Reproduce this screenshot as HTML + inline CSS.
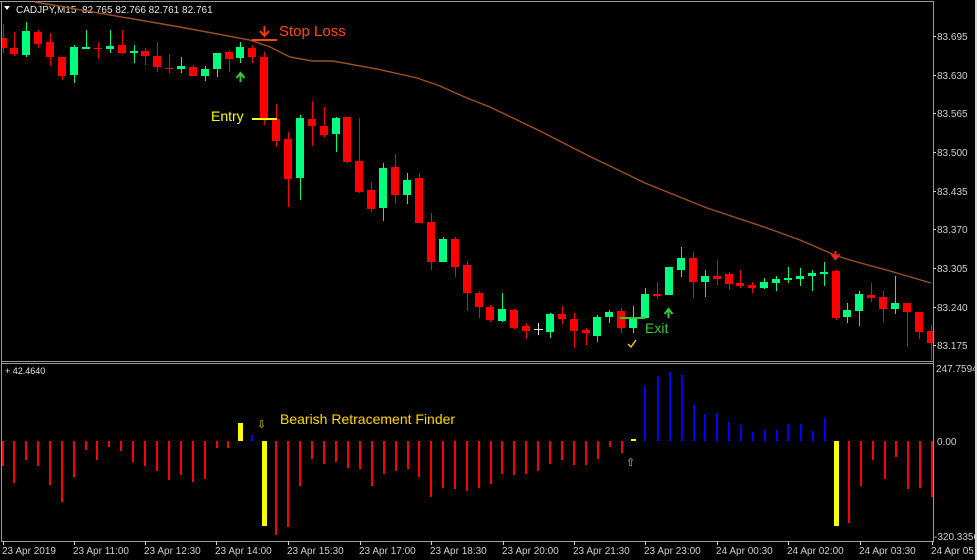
<!DOCTYPE html>
<html><head><meta charset="utf-8"><style>
html,body{margin:0;padding:0;background:#000;width:977px;height:560px;overflow:hidden}
svg{display:block}
text{font-family:"Liberation Sans",sans-serif}
</style></head><body>
<svg width="977" height="560" viewBox="0 0 977 560" xmlns="http://www.w3.org/2000/svg">
<rect width="977" height="560" fill="#000"/>
<rect x="975" y="0" width="2" height="560" fill="#d8d8d8"/>
<g stroke="#9a9a9a" stroke-width="1" fill="none" shape-rendering="crispEdges">
<line x1="0" y1="1.5" x2="934" y2="1.5"/>
<line x1="1.5" y1="1" x2="1.5" y2="541"/>
<line x1="933.5" y1="1" x2="933.5" y2="541"/>
<line x1="1" y1="361.5" x2="934" y2="361.5"/>
<line x1="1" y1="363.5" x2="934" y2="363.5"/>
<line x1="1" y1="541.5" x2="934" y2="541.5"/>
</g>
<g fill="#cfcfcf" font-size="10">
<text x="937" y="40">83.695</text><text x="937" y="79">83.630</text><text x="937" y="117">83.565</text><text x="937" y="156">83.500</text><text x="937" y="195">83.435</text><text x="937" y="233">83.370</text><text x="937" y="272">83.305</text><text x="937" y="311">83.240</text><text x="937" y="349">83.175</text>
<text x="936" y="372">247.7594</text><text x="937" y="445">0.00</text><text x="934" y="540">-320.3356</text>
</g>
<g stroke="#cfcfcf" shape-rendering="crispEdges">
<line x1="933" y1="36.5" x2="936" y2="36.5"/><line x1="933" y1="75.5" x2="936" y2="75.5"/><line x1="933" y1="113.5" x2="936" y2="113.5"/><line x1="933" y1="152.5" x2="936" y2="152.5"/><line x1="933" y1="191.5" x2="936" y2="191.5"/><line x1="933" y1="229.5" x2="936" y2="229.5"/><line x1="933" y1="268.5" x2="936" y2="268.5"/><line x1="933" y1="307.5" x2="936" y2="307.5"/><line x1="933" y1="345.5" x2="936" y2="345.5"/>
</g>
<polygon points="4,6 10,6 7,10" fill="#fff"/>
<text x="16" y="13" fill="#e8e8e8" font-size="10">CADJPY,M15&#160;&#160;82.765 82.766 82.761 82.761</text>
<polyline fill="none" stroke="#a0521e" stroke-width="1.4" points="35,2 180,27 250,40 270,47 290,57 312,61 333,61 377,69 417,78 440,86 467,98 490,107 540,131 587,155 645,183 707,208 767,228 800,240 837,256 857,262 890,271 931,283"/>
<g shape-rendering="crispEdges">
<g stroke="#ff0000" stroke-width="1">
<path d="M3.5 24V53M14.5 32V56M38.5 30V48M50.5 33V66M62.5 57V80M98.5 42V59M122.5 30V54M145.5 48V65M157.5 42V72M169.5 54V73M193.5 65V76M229.5 50V72M252.5 45V63M264.5 52V125M276.5 104V147M288.5 132V207M312.5 101V146M324.5 107V137M347.5 117V163M359.5 118V193M371.5 182V212M395.5 154V204M419.5 173V223M431.5 213V270M455.5 237V277M467.5 261V311M479.5 291V318M490.5 305V322M514.5 309V329M526.5 323V339M562.5 306V324M574.5 313V348M586.5 328V345M621.5 308V333M657.5 282V299M693.5 252V298M717.5 260V285M729.5 272V290M740.5 270V288M752.5 282V293M836.5 270V320M871.5 283V302M883.5 291V322M907.5 303V347M919.5 312V339M931.5 325V360"/>
</g>
<g stroke="#00ff7f" stroke-width="1">
<path d="M26.5 22V57M74.5 45V83M86.5 30V49M110.5 30V53M134.5 45V63M181.5 57V73M205.5 66V81M217.5 53V77M240.5 42V63M300.5 115V200M336.5 117V152M383.5 163V221M407.5 173V204M443.5 237V262M502.5 293V322M550.5 313V338M597.5 315V342M609.5 310V323M633.5 306V333M645.5 288V318M669.5 267V295M681.5 247V277M705.5 270V297M764.5 278V289M776.5 276V291M788.5 267V283M800.5 268V286M812.5 270V291M824.5 262V286M847.5 303V323M859.5 291V326M895.5 276V314"/>
</g>
<g fill="#ff0000">
<rect x="2" y="38" width="5" height="10"/><rect x="10" y="48" width="8" height="6"/><rect x="34" y="32" width="8" height="12"/><rect x="46" y="42" width="8" height="15"/><rect x="58" y="57" width="8" height="19"/><rect x="94" y="48" width="8" height="1"/><rect x="118" y="45" width="8" height="8"/><rect x="141" y="51" width="8" height="5"/><rect x="153" y="56" width="8" height="11"/><rect x="165" y="68" width="8" height="1"/><rect x="189" y="67" width="8" height="9"/><rect x="225" y="52" width="8" height="7"/><rect x="248" y="48" width="8" height="9"/><rect x="260" y="57" width="8" height="61"/><rect x="272" y="119" width="8" height="22"/><rect x="284" y="139" width="8" height="40"/><rect x="308" y="119" width="8" height="7"/><rect x="320" y="126" width="8" height="9"/><rect x="343" y="117" width="8" height="45"/><rect x="355" y="161" width="8" height="31"/><rect x="367" y="190" width="8" height="19"/><rect x="391" y="167" width="8" height="28"/><rect x="415" y="178" width="8" height="45"/><rect x="427" y="222" width="8" height="40"/><rect x="451" y="239" width="8" height="28"/><rect x="463" y="265" width="8" height="28"/><rect x="475" y="293" width="8" height="14"/><rect x="486" y="307" width="8" height="13"/><rect x="510" y="310" width="8" height="18"/><rect x="522" y="326" width="8" height="5"/><rect x="558" y="314" width="8" height="5"/><rect x="570" y="319" width="8" height="12"/><rect x="582" y="330" width="8" height="3"/><rect x="617" y="311" width="8" height="17"/><rect x="653" y="294" width="8" height="2"/><rect x="689" y="258" width="8" height="24"/><rect x="713" y="276" width="8" height="3"/><rect x="725" y="274" width="8" height="10"/><rect x="736" y="283" width="8" height="3"/><rect x="748" y="285" width="8" height="3"/><rect x="832" y="271" width="8" height="47"/><rect x="867" y="295" width="8" height="3"/><rect x="879" y="297" width="8" height="12"/><rect x="903" y="303" width="8" height="9"/><rect x="915" y="312" width="8" height="20"/><rect x="927" y="331" width="6" height="12"/>
</g>
<g fill="#00ff7f">
<rect x="22" y="31" width="8" height="24"/><rect x="70" y="47" width="8" height="28"/><rect x="82" y="47" width="8" height="2"/><rect x="106" y="46" width="8" height="3"/><rect x="130" y="51" width="8" height="2"/><rect x="177" y="66" width="8" height="3"/><rect x="201" y="69" width="8" height="7"/><rect x="213" y="53" width="8" height="16"/><rect x="236" y="47" width="8" height="11"/><rect x="296" y="118" width="8" height="60"/><rect x="332" y="118" width="8" height="16"/><rect x="379" y="168" width="8" height="40"/><rect x="403" y="180" width="8" height="15"/><rect x="439" y="239" width="8" height="23"/><rect x="498" y="309" width="8" height="12"/><rect x="546" y="314" width="8" height="18"/><rect x="593" y="317" width="8" height="19"/><rect x="605" y="312" width="8" height="5"/><rect x="629" y="319" width="8" height="9"/><rect x="641" y="294" width="8" height="24"/><rect x="665" y="267" width="8" height="28"/><rect x="677" y="258" width="8" height="12"/><rect x="701" y="276" width="8" height="6"/><rect x="760" y="282" width="8" height="6"/><rect x="772" y="279" width="8" height="4"/><rect x="784" y="278" width="8" height="2"/><rect x="796" y="276" width="8" height="3"/><rect x="808" y="273" width="8" height="3"/><rect x="820" y="272" width="8" height="2"/><rect x="843" y="310" width="8" height="7"/><rect x="855" y="294" width="8" height="17"/><rect x="891" y="303" width="8" height="6"/>
</g>
<path d="M538.5 323V335M534 329.5H543" stroke="#e0e0e0"/>
</g>
<path d="M264.5 26V35M260 31L264.5 36L269 31" stroke="#ff3a10" stroke-width="2" fill="none"/>
<rect x="252" y="39" width="25" height="2" fill="#ff4a10"/>
<text x="279" y="36" fill="#ff4a10" font-size="15">Stop Loss</text>
<rect x="252" y="118" width="25" height="2" fill="#ffff00"/>
<text x="211" y="121" fill="#ffff00" font-size="14">Entry</text>
<path d="M240.5 82V74M236.5 78L240.5 73L244.5 78" stroke="#33cc33" stroke-width="2" fill="none"/>
<path d="M668.5 318V310M664.5 314L668.5 309L672.5 314" stroke="#33cc33" stroke-width="2" fill="none"/>
<rect x="620" y="317" width="25" height="2" fill="#33cc33"/>
<text x="645" y="333" fill="#33cc33" font-size="14">Exit</text>
<path d="M628 344L631 347L636 340" stroke="#ffdd00" stroke-width="1.3" fill="none"/>
<path d="M835.5 251V258M831.5 254L835.5 259L839.5 254" stroke="#ff2020" stroke-width="2" fill="none"/>
<text x="5" y="374" fill="#e8e8e8" font-size="9">+ 42.4640</text>
<g stroke="#ff0000" stroke-width="2" shape-rendering="crispEdges">
<path d="M3 441V466M14 441V483M26 441V460M38 441V466M50 441V485M62 441V502M74 441V477M86 441V450M97 441V460M109 441V447M121 441V451M133 441V462M145 441V466M157 441V471M169 441V480M181 441V475M193 441V482M205 441V479M217 441V448M228 441V448M276 441V535M288 441V527M300 441V486M312 441V459M324 441V464M336 441V462M348 441V468M360 441V469M372 441V486M384 441V474M396 441V471M408 441V469M419 441V477M431 441V497M443 441V488M455 441V489M467 441V491M479 441V488M491 441V484M502 441V474M514 441V475M526 441V474M538 441V471M550 441V464M562 441V460M574 441V465M586 441V465M598 441V459M610 441V447M622 441V453M849 441V523M861 441V486M873 441V460M885 441V479M896 441V457M908 441V489M920 441V488M932 441V497"/>
</g>
<g stroke="#0000ff" stroke-width="2" shape-rendering="crispEdges">
<path d="M252 441V435M645 441V386M658 441V376M670 441V372M682 441V375M694 441V405M705 441V414M717 441V413M729 441V422M741 441V425M753 441V432M765 441V430M777 441V430M788 441V424M801 441V424M813 441V431M825 441V418"/>
</g>
<g fill="#ffff00">
<rect x="238" y="423" width="5" height="18"/><rect x="262" y="441" width="5" height="85"/><rect x="631" y="439" width="5" height="2"/><rect x="834" y="441" width="5" height="85"/>
</g>
<text x="257" y="428" fill="#e8c800" font-size="11">⇩</text>
<text x="626" y="466" fill="#e8c800" font-size="11">⇧</text>
<text x="280" y="424" fill="#ffd700" font-size="14">Bearish Retracement Finder</text>
<g stroke="#cfcfcf" shape-rendering="crispEdges">
<path d="M3.5 541V545M74.5 541V545M145.5 541V545M216.5 541V545M288.5 541V545M360.5 541V545M431.5 541V545M503.5 541V545M574.5 541V545M645.5 541V545M717.5 541V545M788.5 541V545M860.5 541V545M932.5 541V545"/>
</g>
<g fill="#cfcfcf" font-size="10">
<text x="2" y="554">23 Apr 2019</text><text x="73" y="554">23 Apr 11:00</text><text x="144" y="554">23 Apr 12:30</text><text x="215" y="554">23 Apr 14:00</text><text x="287" y="554">23 Apr 15:30</text><text x="359" y="554">23 Apr 17:00</text><text x="430" y="554">23 Apr 18:30</text><text x="502" y="554">23 Apr 20:00</text><text x="573" y="554">23 Apr 21:30</text><text x="644" y="554">23 Apr 23:00</text><text x="716" y="554">24 Apr 00:30</text><text x="787" y="554">24 Apr 02:00</text><text x="859" y="554">24 Apr 03:30</text><text x="931" y="554">24 Apr 05:00</text>
</g>
</svg>
</body></html>
